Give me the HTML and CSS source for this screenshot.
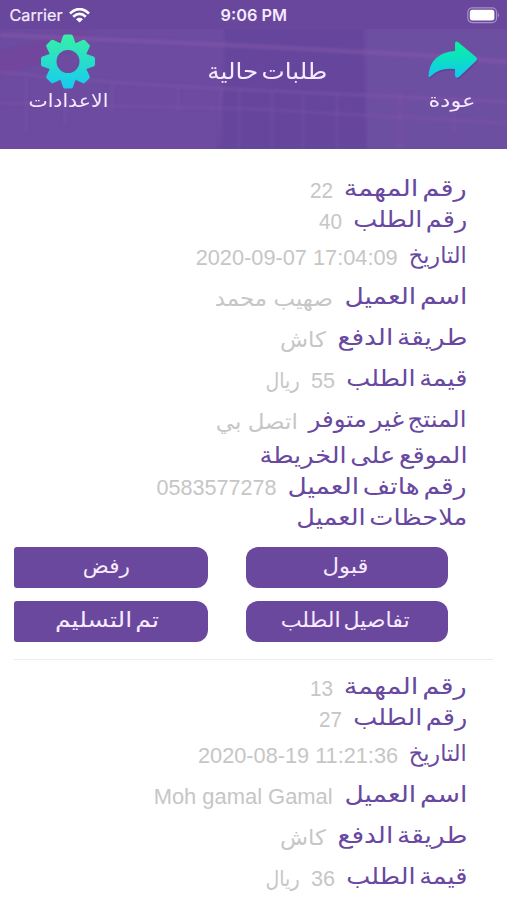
FILE: index.html
```html
<!DOCTYPE html>
<html lang="ar">
<head>
<meta charset="utf-8">
<title>طلبات حالية</title>
<link rel="stylesheet" href="styles.css">
</head>
<body>
<header class="header">
  <svg class="backdrop" viewBox="0 0 507 149" preserveAspectRatio="none" aria-hidden="true">
    <defs><filter id="soft"><feGaussianBlur stdDeviation="1.2"/></filter></defs>
    <path d="M0 29H507V149H0Z" fill="#6c4ba0"/>
    <g filter="url(#soft)">
      <path d="M225 29H363L366 149H218L224 80Z" fill="#5d3f97" opacity=".5"/>
      <path d="M367 29H507V149H368Z" fill="#7453a5" opacity=".4"/>
      <path d="M0 52L88 29V45L0 76Z" fill="#7d3f98" opacity=".4"/>
      <g fill="none" stroke="#8057a9">
        <path d="M0 35L230 45L420 55L507 62" stroke-width="5" opacity=".6"/>
        <path d="M0 72Q110 84 254 90L507 102" stroke-width="4" opacity=".4"/>
        <path d="M0 103L254 109L507 123" stroke-width="4" opacity=".3"/>
        <path d="M26 78V132M65 79V125M112 83V112M178 88V112M221 90V145M239 91V149M272 92V149M303 94V149M337 94V149M400 92V149M454 95V132" stroke-width="5" opacity=".22"/>
      </g>
    </g>
  </svg>
  <div class="status">
    <div class="carrier"><span>Carrier</span>
      <svg width="21" height="15" viewBox="0 0 21 15"><path d="M1 5.4Q10.500-3.200 20 5.400M4.200 8.700Q10.500 3.200 16.800 8.700" fill="none" stroke="#fff" stroke-width="2.700"/><path d="M7 11.200Q10.500 8.400 14 11.200L10.500 14.600Z" fill="#fff"/></svg>
    </div>
    <div class="clock">9:06 PM</div>
    <svg class="battery" width="33" height="17" viewBox="0 0 33 17"><rect x=".8" y=".8" width="28.800" height="14.800" rx="4.500" fill="none" stroke="#a891c6" stroke-width="1.200"/><rect x="2.800" y="2.800" width="24.600" height="10.600" rx="2.600" fill="#fff"/><path d="M31 5.800Q33 8.200 31 10.600Z" fill="#a891c6"/></svg>
  </div>
  <nav class="nav">
    <div class="tool settings">
      <svg width="54" height="55" viewBox="-27 -27.500 54 55">
        <defs>
          <linearGradient id="gear" gradientUnits="userSpaceOnUse" x1="0" y1="-27" x2="0" y2="27"><stop offset="0" stop-color="#38f0a5"/><stop offset="1" stop-color="#16cbf0"/></linearGradient>
          <path id="tooth" d="M-8-17L-5-25.500Q-4.500-27-3-27H3Q4.500-27 5-25.500L8-17Z"/>
          <mask id="hole" maskUnits="userSpaceOnUse" x="-28" y="-28" width="56" height="56"><g fill="#fff"><circle r="19"/><use href="#tooth"/><use href="#tooth" transform="rotate(45)"/><use href="#tooth" transform="rotate(90)"/><use href="#tooth" transform="rotate(135)"/><use href="#tooth" transform="rotate(180)"/><use href="#tooth" transform="rotate(225)"/><use href="#tooth" transform="rotate(270)"/><use href="#tooth" transform="rotate(315)"/></g><circle r="11.500" fill="#000"/></mask>
        </defs>
        <rect x="-28" y="-28" width="56" height="56" fill="url(#gear)" mask="url(#hole)"/>
      </svg>
      <div class="fit" data-width="80" dir="rtl"><span>الاعدادات</span></div>
    </div>
    <h1 class="fit title" data-width="120" dir="rtl"><span>طلبات حالية</span></h1>
    <div class="tool back">
      <svg width="54" height="42" viewBox="0 0 54 42">
        <defs><linearGradient id="arrow" x1="0" y1="0" x2="0" y2="1"><stop offset="0" stop-color="#06f59b"/><stop offset="1" stop-color="#12c8f0"/></linearGradient></defs>
        <path d="M28 4Q28 .5 31 2L49 17Q51 19 49 21L32 37Q28 39 28 35V29Q13 27 4 36Q2 38 1.500 36Q3 13 28 11Z" fill="#4b3280" opacity=".35" transform="translate(1 1.500)"/>
        <path d="M28 4Q28 .5 31 2L49 17Q51 19 49 21L32 37Q28 39 28 35V29Q13 27 4 36Q2 38 1.500 36Q3 13 28 11Z" fill="url(#arrow)"/>
      </svg>
      <div class="fit" data-width="47" dir="rtl"><span>عودة</span></div>
    </div>
  </nav>
</header>
<main class="orders" dir="rtl">
  <section class="order">
    <div class="row"><div class="fit label" data-width="123"><span>رقم المهمة</span></div><div class="fit value" data-width="23"><span>22</span></div></div>
    <div class="row"><div class="fit label" data-width="114"><span>رقم الطلب</span></div><div class="fit value" data-width="23"><span>40</span></div></div>
    <div class="row tall"><div class="fit label" data-width="58"><span>التاريخ</span></div><div class="fit value" data-width="202"><span dir="ltr">2020-09-07 17:04:09</span></div></div>
    <div class="row tall"><div class="fit label" data-width="123"><span>اسم العميل</span></div><div class="fit value" data-width="118"><span>صهيب محمد</span></div></div>
    <div class="row tall"><div class="fit label" data-width="130"><span>طريقة الدفع</span></div><div class="fit value" data-width="46"><span>كاش</span></div></div>
    <div class="row tall"><div class="fit label" data-width="121"><span>قيمة الطلب</span></div><div class="fit value" data-width="24"><span>55</span></div><div class="fit value" data-width="34"><span>ريال</span></div></div>
    <div class="row tall"><div class="fit label" data-width="158"><span>المنتج غير متوفر</span></div><div class="fit value" data-width="82"><span>اتصل بي</span></div></div>
    <div class="row"><div class="fit label" data-width="208"><span>الموقع على الخريطة</span></div></div>
    <div class="row"><div class="fit label" data-width="179"><span>رقم هاتف العميل</span></div><div class="fit value" data-width="120"><span>0583577278</span></div></div>
    <div class="row"><div class="fit label" data-width="171"><span>ملاحظات العميل</span></div></div>
    <div class="actions">
      <button><span class="fit" data-width="46"><span>قبول</span></span></button>
      <button class="edge"><span class="fit" data-width="47"><span>رفض</span></span></button>
      <button><span class="fit" data-width="129"><span>تفاصيل الطلب</span></span></button>
      <button class="edge"><span class="fit" data-width="104"><span>تم التسليم</span></span></button>
    </div>
  </section>
  <section class="order">
    <div class="row"><div class="fit label" data-width="123"><span>رقم المهمة</span></div><div class="fit value" data-width="23"><span>13</span></div></div>
    <div class="row"><div class="fit label" data-width="114"><span>رقم الطلب</span></div><div class="fit value" data-width="23"><span>27</span></div></div>
    <div class="row tall"><div class="fit label" data-width="58"><span>التاريخ</span></div><div class="fit value" data-width="200"><span dir="ltr">2020-08-19 11:21:36</span></div></div>
    <div class="row tall"><div class="fit label" data-width="123"><span>اسم العميل</span></div><div class="fit value" data-width="179"><span dir="ltr">Moh gamal Gamal</span></div></div>
    <div class="row tall"><div class="fit label" data-width="130"><span>طريقة الدفع</span></div><div class="fit value" data-width="46"><span>كاش</span></div></div>
    <div class="row tall"><div class="fit label" data-width="121"><span>قيمة الطلب</span></div><div class="fit value" data-width="24"><span>36</span></div><div class="fit value" data-width="34"><span>ريال</span></div></div>
  </section>
</main>
<script src="fit.js"></script>
</body>
</html>
```
FILE: styles.css
```css
* { box-sizing: border-box; }
html, body { margin: 0; }
body { background: #fff; font-family: "Liberation Sans", "DejaVu Sans", sans-serif; }
.header { position: relative; height: 149px; background: #68479c; color: #f5eaff; overflow: hidden; }
.backdrop { position: absolute; inset: 0; width: 100%; height: 100%; }
.status { position: relative; height: 29px; background: #68479c; display: grid; grid-template-columns: 1fr auto 1fr; align-items: center; padding: 1px 7px 0 9.500px; }
.carrier { display: flex; align-items: center; gap: 6px; font: 16.200px/20px Inter, sans-serif; -webkit-text-stroke: .2px; }
.clock { font: 600 16.300px/20px Inter, sans-serif; margin-right: 2px; }
.battery { justify-self: end; }
.nav { position: relative; display: flex; justify-content: space-between; height: 120px; padding: 0 31px 0 28px; font-family: "DejaVu Sans", sans-serif; font-size: 18.500px; }
.tool { display: flex; flex-direction: column; align-items: center; }
.settings { padding-top: 5px; }
.settings .fit { margin-top: -2px; }
.back { padding-top: 11px; width: 47px; }
.back svg { flex: none; margin: 0 0 5px 2px; }
.fit { display: flex; flex: none; line-height: 28px; white-space: nowrap; }
.fit > span { flex: none; transform-origin: right center; }
.title { margin: 28px 12px 0 9px; font-size: 23px; font-weight: 400; word-spacing: -4px; }
.orders { height: 751px; padding: 24.500px 14px 0; overflow: hidden; }
.order { height: 498px; }
.order:last-child { height: auto; }
.row { display: flex; align-items: center; height: 30.800px; padding-right: 26px; gap: 11px; }
.tall { height: 41px; }
.label { padding-bottom: 1px; color: #6848a0; font-family: "DejaVu Sans", sans-serif; font-size: 23px; word-spacing: -4px; }
.value { color: #c6c6c6; font-size: 21.500px; padding-top: 4px; }
.actions { display: grid; grid-template-columns: 202px 194px; gap: 13px 38px; height: 113px; margin-top: 14.500px; padding-right: 45px; border-bottom: 1px solid #ececec; align-content: start; }
button { display: flex; justify-content: center; align-items: center; height: 41px; padding: 0 3px 3px 0; border: 0; border-radius: 12px; background: #69489d; color: #f8eaff; font-family: "DejaVu Sans", sans-serif; font-size: 20.500px; word-spacing: -4px; }
.edge { border-radius: 3px 12px 12px 3px; padding-right: 9px; }
```
FILE: fit.js
```js
document.querySelectorAll(".fit").forEach((box) => {
  const text = box.firstElementChild;
  const width = Number(box.dataset.width);
  const natural = text.getBoundingClientRect().width;
  box.style.width = `${width}px`;
  text.style.transform = `scaleX(${width / natural})`;
});
```
